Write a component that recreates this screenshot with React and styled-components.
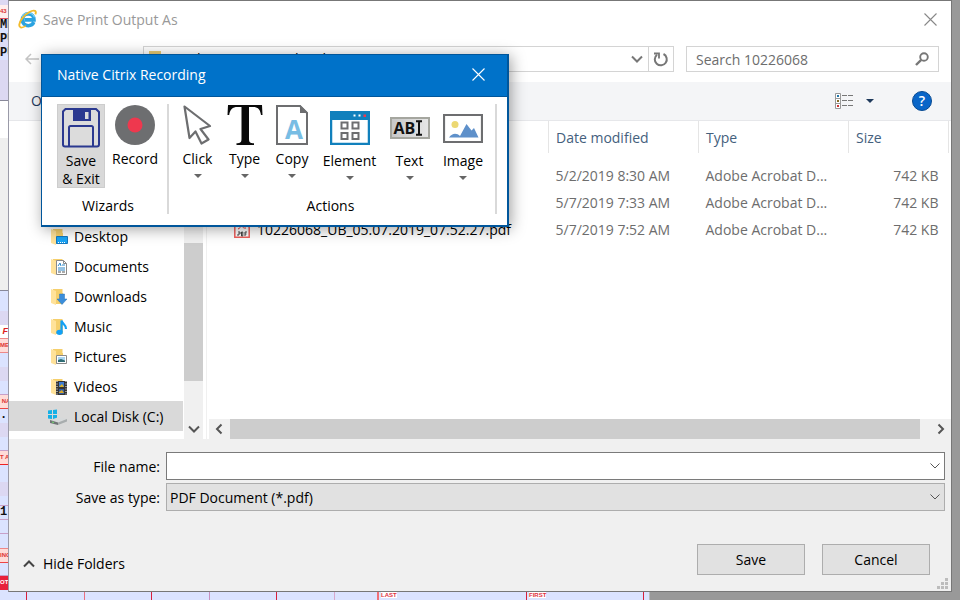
import React from "react";
import styled, { createGlobalStyle } from "styled-components";

const Global = createGlobalStyle`
  * { box-sizing: border-box; }
  html, body { margin: 0; padding: 0; }
  body { font-family: "Open Sans", "Noto Sans", sans-serif; font-size: 14px; line-height: 20px; color: #000; background: #999; overflow: hidden; }
  button, input, select { font: inherit; color: inherit; margin: 0; padding: 0; border: 0; background: none; }
  svg { display: block; flex: none; }
`;

const Desktop = styled.div`
  position: relative;
  min-height: 100vh;
  padding: 0 8px 8px;
`;

/* ---------- form page behind the dialog ---------- */

const Backdrop = styled.div`
  position: absolute;
  inset: 0;
  display: flex;
  justify-content: space-between;
  overflow: hidden;
`;

const FormPage = styled.div`
  width: 68%;
  max-width: 650px;
  display: flex;
  flex-direction: column;
  background: #dbe3ff;
  border-right: 1px solid #bbb;
`;

const FormBand = styled.div`
  flex: none;
  height: ${(p) => p.$h}px;
  background: ${(p) => p.$bg || "#dbe3ff"};
  border-bottom: ${(p) => (p.$line ? `1px solid ${p.$line}` : "0")};
  color: ${(p) => p.$color || "#d33"};
  font: ${(p) => p.$font || '700 6px/12px "Liberation Sans", sans-serif'};
  white-space: nowrap;
  overflow: hidden;
`;

const FormColumns = styled.div`
  flex: 1;
  display: flex;
`;

const FormCell = styled.div`
  width: ${(p) => p.$w}px;
  border-right: ${(p) => p.$b || 1}px solid ${(p) => p.$line};
  padding: 1px 2px;
  color: #e03040;
  font: 700 6px/8px "Liberation Sans", sans-serif;
`;

const CellTag = styled.span`
  background: #fff;
`;

const mono = '700 12px/13px "Liberation Mono", monospace';
const bands = [
  { h: 5, bg: "#dcd8f2" },
  { h: 14, bg: "#ffeeee", line: "#e05060", text: "43" },
  { h: 14, bg: "#dbe3ff", color: "#111", font: mono, text: "MEDI" },
  { h: 14, bg: "#dcdcf6", color: "#111", font: mono, text: "PU" },
  { h: 13, bg: "#dbe3ff", color: "#111", font: mono, text: "PU" },
  { h: 41, bg: "#dcd8f2", line: "#889" },
  { h: 37, bg: "#fff" },
  { h: 153, bg: "#efefef", line: "#889" },
  { h: 20 },
  { h: 14, bg: "#dcd8f2" },
  { h: 14, bg: "#fff", line: "#e88", color: "#d22", font: 'italic 700 9px/13px "Liberation Sans", sans-serif', text: "\u00a0F" },
  { h: 14, bg: "#ffdcd8", line: "#e88", text: "ME" },
  { h: 14 },
  { h: 14, bg: "#dcd8f2" },
  { h: 14, line: "#c8a0c8" },
  { h: 14, bg: "#ffdcd8", line: "#e44", text: "\u00a0NA" },
  { h: 14, color: "#111", font: mono, text: ".," },
  { h: 14, bg: "#dcd8f2" },
  { h: 14, line: "#c8a0c8" },
  { h: 14, bg: "#ffdcd8", line: "#e22", text: "T A" },
  { h: 17 },
  { h: 14, bg: "#dcd8f2" },
  { h: 10, line: "#c8a0c8" },
  { h: 14, color: "#111", font: mono, line: "#c8a0c8", text: "1" },
  { h: 14, line: "#c8a0c8" },
  { h: 15, line: "#e88" },
  { h: 14, bg: "#ffdcd8", line: "#e44", text: "ING" },
  { h: 13, line: "#c8a0c8" },
  { h: 14, bg: "#e8203c", color: "#fff", text: "OTH" },
];
const cells = [
  { w: 27, line: "#d8203c" },
  { w: 58, line: "#ea7080" },
  { w: 67, line: "#d8203c" },
  { w: 58, line: "#c890c0" },
  { w: 67, line: "#d8203c" },
  { w: 58, line: "#d8a8cc" },
  { w: 44, line: "#f07078", b: 2 },
  { w: 148, line: "#d8203c", text: "LAST" },
  { w: 117, line: "#d8203c", text: "FIRST" },
];

/* ---------- save dialog ---------- */

const Dialog = styled.section`
  position: relative;
  display: flex;
  flex-direction: column;
  min-height: calc(100vh - 8px);
  background: #fff;
  border: 1px solid #777;
  border-left-color: #9a9aa8;
`;

const TitleBar = styled.header`
  display: flex;
  align-items: center;
  gap: 6px;
  height: 36px;
  padding: 0 14px 0 9px;
  color: #999;
`;

const Title = styled.h1`
  flex: 1;
  margin: 0;
  padding-top: 2px;
  font-size: 14px;
  font-weight: 400;
`;

const IconButton = styled.button`
  display: grid;
  place-items: center;
  flex: none;
  width: ${(p) => p.$w || 14}px;
`;

const AddressRow = styled.div`
  display: flex;
  align-items: center;
  gap: 12px;
  height: 45px;
  padding: 0 12px 1px 16px;
`;

const NavArrows = styled.div`
  width: 106px;
  display: flex;
`;

const AddressBox = styled.div`
  flex: 1;
  display: flex;
  align-items: center;
  height: 26px;
  border: 1px solid #d4d4d4;
`;

const Crumbs = styled.div`
  flex: 1;
  display: flex;
  align-items: center;
  gap: 12px;
  padding-left: 5px;
`;

const Refresh = styled.button`
  display: grid;
  place-items: center;
  align-self: stretch;
  width: 25px;
  border-left: 1px solid #d4d4d4;
`;

const SearchBox = styled.div`
  display: flex;
  align-items: center;
  width: 253px;
  height: 26px;
  padding: 0 9px;
  border: 1px solid #d4d4d4;
`;

const SearchInput = styled.input`
  flex: 1;
  min-width: 0;
  padding-top: 2px;
  outline: 0;
  &::placeholder { color: #6d6d6d; opacity: 1; }
`;

const Toolbar = styled.div`
  display: flex;
  align-items: center;
  height: 39px;
  padding: 0 19px 0 22px;
  background: #f4f5f7;
  border-bottom: 1px solid #e6e7ea;
  color: #1e395b;
`;

const Organize = styled.button`
  margin-right: auto;
`;

const ViewButton = styled.button`
  display: flex;
  align-items: center;
  gap: 13px;
  margin-right: 38px;
`;

const Browser = styled.div`
  flex: 1;
  display: flex;
  min-height: 0;
`;

const NavTree = styled.nav`
  width: 174px;
  display: flex;
  flex-direction: column;
  justify-content: flex-end;
  padding-bottom: 8px;
`;

const NavItem = styled.a`
  display: flex;
  align-items: center;
  gap: 6px;
  height: 30px;
  padding: 2px 0 0 ${(p) => (p.$root ? 39 : 42)}px;
  background: ${(p) => (p.$root ? "#d9d9d9" : "transparent")};
  color: #000;
  text-decoration: none;
  white-space: nowrap;
`;

const VScroll = styled.div`
  width: 19px;
  margin: 0 3px 0 1px;
  display: flex;
  flex-direction: column;
  background: #f0f0f0;
`;

const VThumb = styled.div`
  flex: 138;
  background: #cdcdcd;
`;

const Space = styled.div`
  flex: ${(p) => p.$grow};
`;

const ScrollButton = styled.button`
  display: grid;
  place-items: center;
  flex: none;
  width: ${(p) => p.$w || 20}px;
  height: 20px;
`;

const FilePane = styled.div`
  flex: 1;
  display: flex;
  flex-direction: column;
  justify-content: space-between;
  border-left: 1px solid #f0f0f0;
`;

const FileTable = styled.table`
  width: calc(100% - 4px);
  margin-left: 2px;
  border-collapse: collapse;
  table-layout: fixed;
`;

const HeadCell = styled.th`
  width: ${(p) => (p.$w ? `${p.$w}px` : "auto")};
  height: 32px;
  padding: 2px 7px 0;
  border-right: 1px solid #e5e5e5;
  color: #44607d;
  font-weight: 400;
  text-align: left;
`;

const Body = styled.tbody`
  &::before { content: ""; display: block; height: 9px; }
`;

const Cell = styled.td`
  height: 27px;
  padding: 0 ${(p) => (p.$right ? 10 : 7)}px 0 7px;
  color: #6d6d6d;
  text-align: ${(p) => (p.$right ? "right" : "left")};
  white-space: nowrap;
`;

const FileName = styled.div`
  display: flex;
  align-items: center;
  gap: 7px;
  padding-left: 18px;
  color: #000;
`;

const HScroll = styled.div`
  display: flex;
  height: 20px;
  margin-left: 2px;
  background: #f0f0f0;
`;

const HThumb = styled.div`
  flex: 1;
  margin: 0 11px 0 1px;
  background: #cdcdcd;
`;

const Footer = styled.footer`
  background: #f0f0f0;
  padding: 13px 6px 2px 9px;
`;

const Field = styled.div`
  display: flex;
  align-items: center;
  gap: 6px;
  margin-bottom: 3px;
`;

const FieldLabel = styled.label`
  width: 142px;
  padding-top: 2px;
  text-align: right;
`;

const FieldBox = styled.div`
  flex: 1;
  display: flex;
  align-items: center;
  height: 28px;
  padding-right: 4px;
  border: 1px solid ${(p) => (p.$grey ? "#adadad" : "#7a7a7a")};
  background: ${(p) => (p.$grey ? "#e1e1e1" : "#fff")};
`;

const TextInput = styled.input`
  flex: 1;
  height: 26px;
  outline: 0;
`;

const Select = styled.select`
  flex: 1;
  height: 26px;
  padding: 2px 0 0 3px;
  appearance: none;
  outline: 0;
`;

const Actions = styled.div`
  display: flex;
  align-items: center;
  gap: 17px;
  padding: 30px 15px 0 5px;
`;

const HideFolders = styled.button`
  display: flex;
  align-items: center;
  gap: 8px;
  margin: 9px auto 0 0;
`;

const PushButton = styled.button`
  width: 108px;
  height: 31px;
  border: 1px solid #adadad;
  background: #e1e1e1;
`;

const Grip = styled.div`
  display: flex;
  justify-content: flex-end;
  height: 14px;
  margin: 0 -3px 0 0;
  align-items: flex-end;
`;

/* ---------- recorder window ---------- */

const Recorder = styled.section`
  position: absolute;
  left: 41px;
  top: 54px;
  width: 468px;
  border: 1px solid #00569b;
  border-right-width: 2px;
  border-bottom-width: 2px;
  background: #fff;
  box-shadow: 2px 2px 14px rgba(0, 0, 0, 0.38);
`;

const RecorderTitle = styled.header`
  display: flex;
  align-items: center;
  justify-content: space-between;
  height: 42px;
  padding: 0 22px 2px 15px;
  background: #0072c9;
  border-bottom: 1px solid #00569b;
  color: #fff;
`;

const RecorderHeading = styled.h2`
  margin: 0;
  font-size: 14px;
  font-weight: 400;
`;

const Ribbon = styled.div`
  display: flex;
  padding: 7px 10px 11px 15px;
`;

const Group = styled.div`
  display: flex;
  flex-direction: column;
  border-right: 2px solid #d9d9d9;
  width: ${(p) => p.$w}px;
  padding-left: ${(p) => p.$pad || 0}px;
`;

const Tools = styled.div`
  display: flex;
  align-items: flex-start;
  height: 93px;
`;

const GroupLabel = styled.div`
  padding-right: 8px;
  text-align: center;
  line-height: 17px;
`;

const Tool = styled.button`
  display: flex;
  flex-direction: column;
  align-items: center;
  width: ${(p) => p.$w}px;
  padding-top: ${(p) => (p.$active ? 3 : 1)}px;
  height: 84px;
  background: ${(p) => (p.$active ? "#d9d9d9" : "transparent")};
  border: 1px solid ${(p) => (p.$active ? "#cdcdcd" : "transparent")};
  border-width: ${(p) => (p.$active ? 1 : 0)}px;
  line-height: 18px;
  white-space: nowrap;
`;

const ToolIcon = styled.span`
  display: flex;
  align-items: center;
  justify-content: center;
  height: ${(p) => (p.$low ? 46 : 40)}px;
  margin-bottom: ${(p) => (p.$low ? 1 : p.$snug ? 4 : 5)}px;
`;

const ToolCaret = styled.span`
  display: flex;
  margin-top: 6px;
`;

/* ---------- drawings ---------- */

const Svg = ({ w, h, children, vb }) => (
  <svg width={w} height={h} viewBox={vb || `0 0 ${w} ${h}`} fill="none" aria-hidden="true">
    {children}
  </svg>
);

const Cross = ({ c, s = 13 }) => (
  <Svg w={s} h={s} vb="0 0 13 13"><path d="M.5.5l12 12M12.5.5l-12 12" stroke={c} strokeWidth="1.1" /></Svg>
);
const Chevron = ({ d = "down", c = "#555", t = 2 }) => {
  const paths = { down: "M1 3.5l5 5 5-5", up: "M1 8.5l5-5 5 5", left: "M8.5 1.500L4 6l4.500 4.500", right: "M3.500 1.500L8 6l-4.500 4.500" };
  return <Svg w={12} h={12}><path d={paths[d]} stroke={c} strokeWidth={t} /></Svg>;
};
const ThinChevron = () => <Svg w={10} h={6}><path d="M.5.5L5 5 9.500.5" stroke="#555" strokeWidth="1" /></Svg>;
const Caret = ({ c = "#666" }) => <Svg w={8} h={4}><path d="M0 0h8L4 4z" fill={c} /></Svg>;

const IeIcon = () => (
  <Svg w={19} h={20}>
    <path d="M15.800 13.200c-.9 2.300-2.900 3.500-5.500 3.500-3.600 0-5.900-2.400-5.900-5.900S6.900 4.900 10.300 4.900c3.400 0 5.700 2.300 5.700 6H6.500" stroke="#2ba3e0" strokeWidth="3.600" />
    <path d="M3.800 8.300c1-2.600 3.400-4.300 6.400-4.300 3.200 0 5.400 1.600 6.300 4.300" stroke="#7fd3f7" strokeWidth="1.200" />
    <path d="M3 18.500C.2 18 1 13.600 4.200 9.400 8 4.200 14.500.6 17 1.900c1 .6 1 2 .3 3.500" stroke="#f2bb2c" strokeWidth="1.900" />
    <path d="M2.800 18.500c1.300.3 3.100-.4 5-1.600" stroke="#f2bb2c" strokeWidth="1.700" />
  </Svg>
);

const folderArt = {
  Desktop: <><path d="M5.500 8.500h11v7h-11z" fill="#19a4f5" stroke="#1478c0" /><path d="M7 14.500h8" stroke="#fff" strokeDasharray="1 1" /></>,
  Documents: <><path d="M5.500 2.500h7l3 3v11h-10z" fill="#fff" stroke="#8a8a8a" /><path d="M12.500 2.500v3h3" stroke="#8a8a8a" /><path d="M7 8l2-3 1 3M11 7h3M7 10h7M7 12h7" stroke="#2d87c8" /><path d="M7 14h3M11 14h3" stroke="#555" /></>,
  Downloads: <path d="M8.500 6h5v5H16l-5 5.500L6 11h2.500z" fill="#3b8edb" stroke="#2773b8" strokeWidth=".5" />,
  Music: <><path d="M10.500 14V2.500c.5 3.500 5 4 4.500 8.500" stroke="#13a0f5" strokeWidth="2.200" /><ellipse cx="8.500" cy="14.300" rx="3.200" ry="2.600" fill="#13a0f5" /></>,
  Pictures: <><path d="M5.500 7.500h10v8h-10z" fill="#fff" stroke="#8a8a8a" /><path d="M7 9h7v3H7z" fill="#a9d5f2" /><path d="M7 14v-2l3-1 4 1.500V14z" fill="#2e6c74" /></>,
  Videos: <><path d="M5 3h11v14H5z" fill="#333" /><path d="M6 3v14M15 3v14" stroke="#fff" strokeDasharray="1 1.500" /><path d="M8 4h5v5H8z" fill="#3e7bd0" /><path d="M8 9l3-3 2 3z" fill="#d8b22c" /><path d="M8 11h5v5H8z" fill="#315da4" /><path d="M8 14l3-2 2 3H8z" fill="#d6a72d" /></>,
};
const FolderIcon = ({ kind }) => (
  <Svg w={17} h={18}>
    <path d="M2 1h9.500v4H12v11H3z" fill="#f5cf6c" />
    <path d="M0 1l5 2v14l-5-2z" fill="#ffe29a" />
    {folderArt[kind]}
  </Svg>
);
const DiskIcon = () => (
  <Svg w={20} h={16}>
    <path d="M0 1.500L4 1v4H0zM5 .9L9 .4V5H5zM0 6h4v4l-4-.5zM5 6h4v4.600l-4-.5z" fill="#14b0e6" />
    <path d="M2 11l9-3 8 2-9 3.500z" fill="#d6d9da" />
    <path d="M2 11l8 2.500V16l-8-2z" fill="#6f7475" /><path d="M10 13.500L19 10v2.500L10 16z" fill="#a8adae" />
    <path d="M4 13l2 .5" stroke="#6fe06f" />
  </Svg>
);
const PdfIcon = () => (
  <Svg w={16} h={16}>
    <path d="M.8.8h10l4.400 4.400v10H.8z" fill="#fff" stroke="#ee5f5b" strokeWidth="1.500" />
    <path d="M4 7c3-1 5-6 3.500-6S8 7 12 6" stroke="#e33" />
    <path d="M4 10h2v2H4v2M7.500 14v-4h1.300v4zM11 14v-4h2M11 12h1.500" stroke="#444" />
  </Svg>
);
const RefreshIcon = () => (
  <Svg w={16} h={16}><path d="M10.500 3A6 6 0 1 1 4 3.700" stroke="#777" strokeWidth="2" /><path d="M1 2.500h5v5" stroke="#777" strokeWidth="1.800" /></Svg>
);
const SearchIcon = () => (
  <Svg w={14} h={14}><circle cx="9" cy="5" r="3.800" stroke="#777" strokeWidth="1.900" /><path d="M6.200 7.800L1 13" stroke="#777" strokeWidth="2.400" /></Svg>
);
const ViewIcon = () => (
  <Svg w={18} h={16}>
    <path d="M.5.500h5v15h-5zM.5 5.500h5M.5 10.500h5" fill="#fff" stroke="#999" />
    <path d="M2 2h2v2H2z" fill="#27a" /><path d="M2 7h2v2H2z" fill="#886b26" /><path d="M2 12h2v2H2z" fill="#c33" />
    <path d="M7 2.500h5M13 2.500h5M7 7.500h5M13 7.500h5M7 12.500h5M13 12.500h5" stroke="#777" />
  </Svg>
);

const HelpButton = styled.button`
  width: 20px;
  height: 20px;
  border: 1px solid #084a92;
  border-radius: 50%;
  background: #0a66c8;
  color: #fff;
  font-weight: 600;
  line-height: 18px;
`;

const FloppyIcon = () => (
  <Svg w={38} h={40}>
    <path d="M3.500 1h30.500l3 3v32.500a2 2 0 0 1-2 2H3a2 2 0 0 1-2-2V3.500z" fill="#dcdcdc" stroke="#2b3990" strokeWidth="2" />
    <path d="M11 1h18v12H11z" fill="#2b3990" /><path d="M23 4h3.500v7H23z" fill="#dcdcdc" />
    <path d="M7 39V19.500a1.500 1.500 0 0 1 1.500-1.500h21a1.500 1.500 0 0 1 1.500 1.500V39" stroke="#2b3990" strokeWidth="2" />
  </Svg>
);
const RecordIcon = () => <Svg w={40} h={40}><circle cx="20" cy="20" r="20" fill="#6d6e70" /><circle cx="20" cy="20" r="7.500" fill="#ee384e" /></Svg>;
const PointerIcon = () => (
  <Svg w={30} h={40}><path d="M1.500 1.500L27 21l-9.500 3 8 10.500-7 4-6-12L6.500 33z" fill="#fff" stroke="#6d6e70" strokeWidth="2.200" strokeLinejoin="round" /></Svg>
);
const TypeIcon = () => (
  <Svg w={36} h={40}><path d="M1 0h34l.5 10h-1.500c-.7-5.400-3-8-8-8h-4v32c0 3.200 1 4.300 5 4.300V40H9.500v-1.700c4 0 5-1.100 5-4.300V2h-4C5.500 2 3 4.600 2.200 10H.5z" fill="#0a0a0a" /></Svg>
);

const CopySheet = styled.span`
  display: grid;
  place-items: center;
  & > * { grid-area: 1 / 1; }
`;
const CopyLetter = styled.span`
  padding: 8px 0 0 4px;
  color: #78bde4;
  font: 700 26px/32px "Open Sans", sans-serif;
`;
const CopyIcon = () => (
  <CopySheet>
    <Svg w={32} h={40}>
      <path d="M1 1h23l7 7v31H1z" fill="#fff" stroke="#6d6e70" strokeWidth="2" /><path d="M24 0l8 8h-8z" fill="#6d6e70" />
    </Svg>
    <CopyLetter aria-hidden="true">A</CopyLetter>
  </CopySheet>
);
const ElementIcon = () => (
  <Svg w={40} h={34}>
    <path d="M1 1h38v32H1z" fill="#fff" stroke="#1180bc" strokeWidth="2.500" /><path d="M0 0h40v9H0z" fill="#1180bc" />
    <path d="M23.500 3.500h2v2h-2zM28.500 3.500h2v2h-2z" fill="#fff" /><path d="M33.500 3.500h2.500v2.500h-2.500z" fill="#ee384e" />
    <path d="M11.500 11.500h6v6h-6zM22.500 11.500h6v6h-6zM11.500 22h6v6h-6zM22.500 22h6v6h-6z" stroke="#6d6e70" strokeWidth="2" />
  </Svg>
);

const TextBadge = styled.span`
  display: flex;
  align-items: center;
  width: 40px;
  height: 22px;
  padding-left: 2px;
  border: 2px solid #a5a69f;
  background: linear-gradient(90deg, #c8c8c8, #e6e6e6);
  color: #111;
  font: 700 16px/18px "Open Sans", sans-serif;
`;
const Ibeam = () => <Svg w={8} h={16}><path d="M1 1.200h2.200L4 2l.8-.8H7M4 2v12M1 14.800h2.200L4 14l.8.8H7" stroke="#111" strokeWidth="2" /></Svg>;

const ImageIcon = () => (
  <Svg w={40} h={29}>
    <path d="M1 1h38v27H1z" fill="#fff" stroke="#6d6e70" strokeWidth="2.200" /><circle cx="12" cy="10.500" r="3.500" fill="#ecd873" />
    <path d="M6 23.500c3.500-5 8-4.500 11-1.500L23.500 10l5 6.500 2.500-2.500 4.500 9.500z" fill="#5e90ca" />
  </Svg>
);

const tools = [
  { label: "Click", w: 47, icon: <PointerIcon /> },
  { label: "Type", w: 47, icon: <TypeIcon /> },
  { label: "Copy", w: 48, icon: <CopyIcon /> },
  { label: "Element", w: 67, low: true, icon: <ElementIcon /> },
  { label: "Text", w: 53, low: true, icon: <TextBadge>AB<Ibeam /></TextBadge> },
  { label: "Image", w: 54, low: true, icon: <ImageIcon /> },
];

const files = [
  { date: "5/2/2019 8:30 AM" },
  { date: "5/7/2019 7:33 AM" },
  { name: "10226068_UB_05.07.2019_07.52.27.pdf", date: "5/7/2019 7:52 AM" },
];

export default function App() {
  return (
    <Desktop>
      <Global />
      <Backdrop>
        <FormPage>
          {bands.map((b, i) => (
            <FormBand key={i} $h={b.h} $bg={b.bg} $line={b.line} $color={b.color} $font={b.font}>{b.text}</FormBand>
          ))}
          <FormColumns>
            {cells.map((c, i) => (
              <FormCell key={i} $w={c.w} $line={c.line} $b={c.b}>{c.text && <CellTag>{c.text}</CellTag>}</FormCell>
            ))}
          </FormColumns>
        </FormPage>
      </Backdrop>

      <Dialog aria-label="Save Print Output As">
        <TitleBar>
          <IeIcon />
          <Title>Save Print Output As</Title>
          <IconButton aria-label="Close"><Cross c="#888" /></IconButton>
        </TitleBar>
        <AddressRow>
          <NavArrows>
            <IconButton aria-label="Back"><Svg w={14} h={12}><path d="M14 6H1M6 1L1 6l5 5" stroke="#c4c4c4" strokeWidth="1.500" /></Svg></IconButton>
          </NavArrows>
          <AddressBox>
            <Crumbs>
              <Svg w={12} h={16}><path d="M0 0h12v16H0z" fill="#e8cb74" /></Svg>
              <span>›</span><span>This PC</span><span>›</span><span>Local Disk (C:)</span><span>›</span><span>PDF</span><span>›</span><span>10226068</span>
            </Crumbs>
            <IconButton $w={22} aria-label="Previous locations"><Chevron c="#777" /></IconButton>
            <Refresh aria-label="Refresh"><RefreshIcon /></Refresh>
          </AddressBox>
          <SearchBox>
            <SearchInput aria-label="Search" placeholder="Search 10226068" />
            <SearchIcon />
          </SearchBox>
        </AddressRow>
        <Toolbar>
          <Organize>Organize</Organize>
          <ViewButton aria-label="Change view"><ViewIcon /><Caret c="#1e395b" /></ViewButton>
          <HelpButton aria-label="Help">?</HelpButton>
        </Toolbar>

        <Browser>
          <NavTree>
            {Object.keys(folderArt).map((n) => (
              <NavItem key={n} href="#"><FolderIcon kind={n} />{n}</NavItem>
            ))}
            <NavItem href="#" $root><DiskIcon />Local Disk (C:)</NavItem>
          </NavTree>
          <VScroll>
            <Space $grow={122} />
            <VThumb />
            <Space $grow={38} />
            <ScrollButton $w={19} aria-label="Scroll down"><Chevron /></ScrollButton>
          </VScroll>
          <FilePane>
            <FileTable>
              <thead>
                <tr>
                  <HeadCell aria-label="Name" />
                  <HeadCell $w={150}>Date modified</HeadCell>
                  <HeadCell $w={150}>Type</HeadCell>
                  <HeadCell $w={100}>Size</HeadCell>
                </tr>
              </thead>
              <Body>
                {files.map((f) => (
                  <tr key={f.date}>
                    <Cell>{f.name && <FileName><PdfIcon />{f.name}</FileName>}</Cell>
                    <Cell>{f.date}</Cell>
                    <Cell>Adobe Acrobat D...</Cell>
                    <Cell $right>742 KB</Cell>
                  </tr>
                ))}
              </Body>
            </FileTable>
            <HScroll>
              <ScrollButton aria-label="Scroll left"><Chevron d="left" /></ScrollButton>
              <HThumb />
              <ScrollButton aria-label="Scroll right"><Chevron d="right" /></ScrollButton>
            </HScroll>
          </FilePane>
        </Browser>

        <Footer>
          <Field>
            <FieldLabel htmlFor="file-name">File name:</FieldLabel>
            <FieldBox><TextInput id="file-name" /><ThinChevron /></FieldBox>
          </Field>
          <Field>
            <FieldLabel htmlFor="file-type">Save as type:</FieldLabel>
            <FieldBox $grey>
              <Select id="file-type"><option>PDF Document (*.pdf)</option></Select>
              <ThinChevron />
            </FieldBox>
          </Field>
          <Actions>
            <HideFolders><Chevron d="up" c="#444" />Hide Folders</HideFolders>
            <PushButton>Save</PushButton>
            <PushButton>Cancel</PushButton>
          </Actions>
          <Grip>
            <Svg w={11} h={11}><path d="M8 0h3v3H8zM4 4h3v3H4zM8 4h3v3H8zM0 8h3v3H0zM4 8h3v3H4zM8 8h3v3H8z" fill="#bcbcbc" /></Svg>
          </Grip>
        </Footer>
      </Dialog>

      <Recorder aria-label="Native Citrix Recording">
        <RecorderTitle>
          <RecorderHeading>Native Citrix Recording</RecorderHeading>
          <IconButton aria-label="Close recorder"><Cross c="#fff" /></IconButton>
        </RecorderTitle>
        <Ribbon>
          <Group $w={112}>
            <Tools>
              <Tool $w={48} $active><ToolIcon $snug><FloppyIcon /></ToolIcon>Save<br />&amp; Exit</Tool>
              <Tool $w={60}><ToolIcon><RecordIcon /></ToolIcon>Record</Tool>
            </Tools>
            <GroupLabel>Wizards</GroupLabel>
          </Group>
          <Group $w={328} $pad={5}>
            <Tools>
              {tools.map((t) => (
                <Tool key={t.label} $w={t.w}>
                  <ToolIcon $low={t.low}>{t.icon}</ToolIcon>
                  {t.label}
                  <ToolCaret><Caret /></ToolCaret>
                </Tool>
              ))}
            </Tools>
            <GroupLabel>Actions</GroupLabel>
          </Group>
        </Ribbon>
      </Recorder>
    </Desktop>
  );
}
